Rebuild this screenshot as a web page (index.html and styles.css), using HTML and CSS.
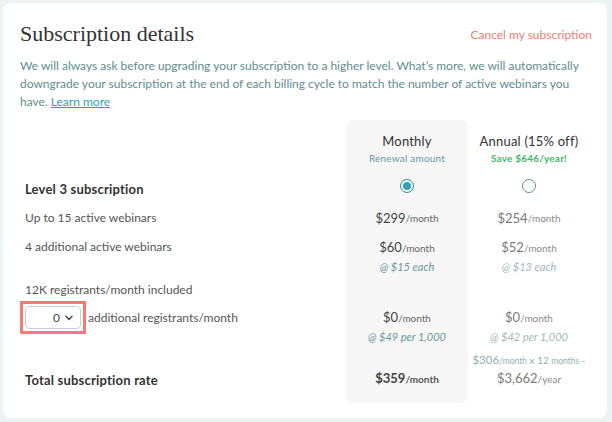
FILE: index.html
```
<!DOCTYPE html>
<html>
<head>
<meta charset="utf-8">
<link rel="stylesheet" href="styles.css">
</head>
<body>
<div class="card">
  <div class="head">
    <h1 class="title">Subscription details</h1>
    <a class="cancel">Cancel my subscription</a>
  </div>
  <p class="intro">We will always ask before upgrading your subscription to a higher level. What’s more, we will automatically downgrade your subscription at the end of each billing cycle to match the number of active webinars you have. <a class="learn">Learn more</a></p>

  <div class="plan">
    <div class="c lab r1"></div>
    <div class="c mon r1 top"><div class="ptitle">Monthly</div><div class="psub">Renewal amount</div></div>
    <div class="c ann r1"><div class="ptitle">Annual (15% off)</div><div class="psave">Save $646/year!</div></div>

    <div class="c lab r2 strong">Level 3 subscription</div>
    <div class="c mon r2 mid"><span class="radio on"></span></div>
    <div class="c ann r2 mid"><span class="radio"></span></div>

    <div class="c lab r3 mid">Up to 15 active webinars</div>
    <div class="c mon r3 mid"><span class="amt">$299</span><span class="per">/month</span></div>
    <div class="c ann r3 mid"><span class="amt">$254</span><span class="per">/month</span></div>

    <div class="c lab r4">4 additional active webinars</div>
    <div class="c mon r4"><div><span class="amt">$60</span><span class="per">/month</span></div><div class="each">@ $15 each</div></div>
    <div class="c ann r4"><div><span class="amt">$52</span><span class="per">/month</span></div><div class="each">@ $13 each</div></div>

    <div class="c lab r5 mid">12K registrants/month included</div>
    <div class="c mon r5"></div>
    <div class="c ann r5"></div>

    <div class="c lab r6 selrow">
      <span class="hl"><span class="sel">0 <svg class="chev" width="8" height="6" viewBox="0 0 8 6"><path d="M1 1.2 L4 4.4 L7 1.2" fill="none" stroke="#444" stroke-width="1.4" stroke-linecap="round" stroke-linejoin="round"/></svg></span></span>
      <span class="seltext">additional registrants/month</span>
    </div>
    <div class="c mon r6"><div><span class="amt">$0</span><span class="per">/month</span></div><div class="each">@ $49 per 1,000</div></div>
    <div class="c ann r6"><div><span class="amt">$0</span><span class="per">/month</span></div><div class="each">@ $42 per 1,000</div></div>

    <div class="c lab r7 strong">Total subscription rate</div>
    <div class="c mon r7 bottom"><div><span class="amt tot">$359</span><span class="per tot">/month</span></div></div>
    <div class="c ann r7"><div class="calc"><span class="camt">$306</span><span class="cper">/month</span> x 12 <span class="cper">months</span> -</div><div><span class="amt">$3,662</span><span class="per">/year</span></div></div>
  </div>
</div>
</body>
</html>
```
FILE: styles.css
```
* { box-sizing: border-box; }
html, body { margin: 0; padding: 0; }
body {
  width: 612px; height: 422px;
  background: #edf3f2;
  padding: 3px 5px 4px 3px;
  font-family: "Lato", "Liberation Sans", sans-serif;
  color: #555;
}
.card {
  background: #fff;
  border-radius: 8px;
  height: 415px;
  padding: 17px 17px 0 17px;
}
.head { display: flex; justify-content: space-between; align-items: center; }
.title {
  margin: 0;
  font-family: "Liberation Serif", serif;
  font-weight: normal;
  font-size: 22px;
  line-height: 28px;
  color: #333;
}
.cancel { color: #f47c72; font-size: 12px; margin-right: -2px; }
.intro {
  margin: 9px 0 0 0;
  font-size: 12px;
  line-height: 18px;
  color: #5e8e8e;
}
.learn { color: #2c9fb4; text-decoration: underline; }
.plan {
  margin-top: 9px;
  display: grid;
  grid-template-columns: 326px 122px 122px;
  grid-template-rows: 53px 29px 31px 45px 23px 45px 57px;
}
.c { font-size: 12px; }
.lab { padding-left: 5px; color: #555; }
.mon { background: #f7f7f7; text-align: center; }
.ann { text-align: center; }
.top { border-radius: 7px 7px 0 0; }
.bottom { border-radius: 0 0 7px 7px; }
.mid { display: flex; align-items: center; justify-content: center; }
.lab.mid { justify-content: flex-start; }
.r1 { padding-top: 12px; }
.ptitle { font-size: 13px; line-height: 18px; color: #333; letter-spacing: 0.2px; }
.psub { font-size: 10px; line-height: 14px; color: #6a9797; margin-top: 1px; letter-spacing: 0.2px; }
.psave { font-size: 10px; line-height: 14px; color: #45b86a; font-weight: bold; margin-top: 1px; letter-spacing: 0.2px; }
.strong { font-weight: bold; font-size: 13px; color: #333; letter-spacing: 0.2px; }
.r2.lab { display: flex; align-items: center; padding-top: 2px; }
.r2.mon, .r2.ann { padding-bottom: 3px; }
.radio {
  width: 14px; height: 14px; border-radius: 50%;
  border: 1px solid #5f9191;
  display: inline-block; background: #fff;
}
.radio.on { border-color: #3a8f9c; box-shadow: inset 0 0 0 2px #fff, inset 0 0 0 8px #34a0b3; }
.amt { font-size: 13px; color: #444; }
.per { font-size: 10px; color: #666; }
.ann .amt { color: #7a7a7a; }
.ann .per { color: #8a8a8a; }
.r4 { padding-top: 7px; line-height: 14px; }
.each { font-style: italic; font-size: 11px; line-height: 14px; margin-top: 5px; color: #6a9797; }
.ann .each { color: #9dbaba; }
.r6.mon, .r6.ann { padding-top: 9px; line-height: 14px; }
.r4.lab { line-height: 14px; }
.selrow { padding-left: 0; display: flex; align-items: flex-start; }
.hl {
  display: inline-flex; width: 66px; height: 33px;
  border: 3px solid #f77a73; padding: 2px;
}
.sel {
  width: 56px; height: 23px;
  border: 1px solid #c9d1d1; border-radius: 4px;
  display: flex; align-items: center; justify-content: flex-end;
  padding-right: 7px; font-size: 12px; color: #444; gap: 5px;
}
.chev { margin-top: 1px; }
.seltext { line-height: 33px; margin-left: 2px; }
.r7 { display: flex; flex-direction: column; justify-content: flex-end; padding-bottom: 16px; }
.r7.lab { padding-bottom: 15px; }
.tot { font-weight: bold; }
.per.tot { font-weight: bold; color: #555; }
.calc { font-size: 10px; color: #8fb0b0; line-height: 14px; margin-bottom: 2px; }
.camt { font-size: 11.5px; }
.cper { font-size: 8.5px; }
.r7 .amt, .r7 .per { line-height: 16px; }
```
